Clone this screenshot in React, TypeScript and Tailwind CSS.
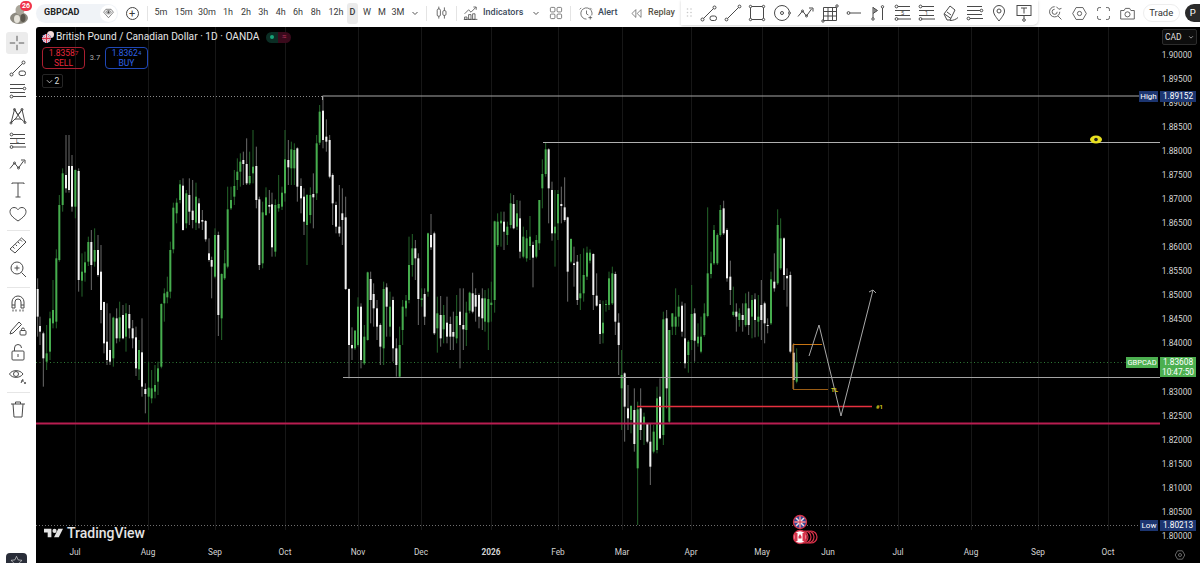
import type { ReactNode } from 'react'

const FONT = "font-['Roboto','Liberation_Sans',sans-serif]"

// x, wick top, body top, body bottom, wick bottom, green? (3x crop units, x from 36, y from 90)
const LEFT: number[][] = [
  [5,565,597,680,740,0],[12,680,708,725,765,0],[22,725,730,805,890,0],[32,705,790,815,840,1],[42,665,685,785,810,1],
  [51,570,660,700,715,1],[61,478,505,695,715,1],[70,315,345,510,515,1],[80,235,250,345,365,1],[90,135,255,295,308,0],
  [99,135,228,300,308,0],[108,195,228,350,365,0],[118,238,240,350,385,1],[128,235,243,570,605,0],[138,490,545,572,620,1],
  [147,485,517,548,575,1],[157,440,456,515,528,1],[166,420,456,525,600,0],[176,415,480,515,530,1],[186,435,480,555,560,0],
  [195,465,545,660,700,0],[204,635,636,760,790,0],[213,640,755,810,825,0],[222,670,780,815,825,0],[232,680,683,805,830,1],
  [242,655,685,745,760,0],[251,635,682,745,755,1],[261,645,675,745,748,0],[270,640,670,740,785,1],[280,645,672,715,745,0],
  [290,690,715,745,775,0],[300,710,742,835,858,0],[309,750,780,838,870,1],[318,685,787,890,920,0],[328,880,897,912,970,0],
  [338,815,893,920,1000,1],[347,840,895,925,940,1],[357,825,885,905,925,1],[366,815,835,875,915,1],[376,640,642,830,835,1],
  [385,595,610,640,695,1],[394,560,605,622,640,1],[403,455,480,605,625,1],[412,338,353,478,490,1],[422,325,338,370,400,1],
  [432,270,283,330,340,1],[441,265,287,420,422,0],[451,300,310,400,415,1],[460,265,315,365,405,0],[470,270,362,390,415,0],
  [480,278,320,398,420,1],[489,325,340,400,415,0],[499,360,390,395,420,0],[509,390,393,448,455,0],[519,445,490,510,515,0],
  [527,500,510,530,625,0],[537,415,435,560,565,1],[547,425,435,675,738,0],[557,550,552,685,750,1],[566,480,520,565,570,1],
  [575,290,358,530,535,1],[585,290,330,355,360,1],[595,240,288,320,345,1],[604,205,245,270,300,1],[613,190,215,245,290,1],
  [622,185,210,222,285,0],[632,145,222,280,285,0],[641,185,258,280,285,1],[651,120,230,250,280,1],[661,170,228,330,355,0],
  [670,320,328,525,540,0],[680,335,367,520,535,1],[690,292,322,375,378,1],[700,300,345,350,370,0],[708,308,343,472,500,0],
  [718,328,345,485,500,1],[728,255,342,355,365,1],[738,290,308,350,360,1],[747,120,208,310,335,1],[757,150,210,232,285,0],
  [766,155,178,235,285,1],[775,160,180,235,285,1],[784,172,175,290,335,0],[795,265,288,325,370,0],[804,295,320,395,435,0],
  [813,312,315,405,525,1],[823,292,315,375,400,1],[832,250,312,322,415,0],[842,135,160,310,330,1],[851,45,65,158,165,1],
  [861,20,62,150,175,0],[871,88,140,155,185,0],[881,135,150,260,265,0],[890,250,255,340,405,0],[900,335,345,410,430,0],
  [910,285,410,430,440,0],[919,295,370,390,465,0],[929,320,382,597,600,0],[939,595,597,765,865,0],[948,712,765,775,810,0],
  [957,720,722,775,780,1],[966,622,650,765,770,1],[975,640,650,810,835,0],[985,705,740,820,825,1],[995,545,547,750,752,1],
  [1004,545,567,630,700,0],[1013,580,612,655,710,0],[1023,630,655,710,750,0],[1033,700,705,770,825,0],[1043,575,597,775,825,1],
  [1052,580,592,650,740,0],[1062,605,650,710,740,1],[1071,620,630,775,815,0],[1081,745,775,825,860,0],[1091,710,765,860,862,1],
  [1100,630,650,720,765,1],[1110,615,632,655,680,1],[1119,440,525,630,640,1],[1129,432,475,525,560,1],[1138,450,475,505,570,0],
  [1147,490,505,627,705,0],[1157,595,625,630,650,1],[1166,595,612,680,705,0],[1176,428,430,605,620,1],[1185,372,435,472,480,0],
  [1195,425,430,730,735,0],
]

// same, x from 420, y from 130
const RIGHT: number[][] = [
  [52,500,550,595,668,1],[62,498,555,625,650,0],[71,525,555,598,640,1],[81,500,578,620,640,0],[91,560,582,620,660,0],
  [100,545,606,620,660,0],[110,495,558,625,640,1],[120,475,545,585,715,0],[130,475,585,598,660,0],[139,515,548,600,648,1],
  [149,485,488,542,550,1],[158,428,490,545,550,0],[167,475,495,530,575,0],[177,490,495,560,595,0],[187,475,505,565,600,0],
  [195,480,505,575,605,1],[205,475,507,577,660,1],[214,455,518,525,575,1],[224,272,274,510,548,1],[233,250,275,345,350,1],
  [243,245,272,280,350,1],[252,245,275,305,360,0],[262,275,290,315,345,1],[272,190,220,285,295,1],[281,195,222,295,298,0],
  [291,210,250,290,300,1],[300,212,265,365,385,0],[310,290,320,380,385,1],[320,300,325,385,395,1],[330,258,320,348,390,1],
  [339,335,345,383,472,0],[349,315,330,380,385,1],[358,210,210,340,360,1],[367,88,132,175,235,1],[377,38,58,132,140,1],
  [386,55,58,175,280,0],[396,155,180,310,332,0],[405,180,290,310,410,1],[414,180,192,280,330,1],[424,170,222,228,280,0],
  [434,142,232,270,275,0],[443,260,262,425,515,0],[453,325,327,395,400,1],[462,350,400,405,470,0],[472,375,395,510,525,0],
  [481,372,490,505,540,1],[491,355,435,490,515,1],[501,350,368,440,450,1],[510,358,368,392,400,1],[520,370,372,495,540,0],
  [530,430,497,527,530,0],[540,510,522,612,642,0],[549,512,578,610,640,1],[558,510,522,525,545,1],[567,425,445,525,540,1],
  [577,410,430,520,525,1],[586,425,432,575,615,0],[596,550,578,645,735,0],[605,660,735,775,900,1],[614,727,730,830,935,0],
  [624,765,835,865,900,0],[633,825,828,870,910,1],[643,775,840,942,965,0],[653,815,838,1015,1185,1],[662,775,835,900,930,0],
  [672,848,860,880,945,1],[682,880,882,935,940,0],[691,880,935,1010,1065,0],[701,885,905,965,970,1],[711,770,805,960,970,1],
  [720,745,800,925,928,0],[730,545,568,915,945,1],[740,540,565,775,835,0],[748,600,600,875,880,1],[757,550,550,590,615,1],
  [767,475,560,590,615,1],[776,495,530,560,590,1],[786,515,527,605,620,0],[795,520,625,700,715,0],[805,630,635,675,728,1],
  [815,465,552,630,660,1],[824,535,550,632,695,0],[834,580,620,640,650,1],[843,560,620,665,670,1],[853,520,550,615,620,1],
  [863,232,430,558,562,1],[873,365,400,432,445,1],[882,285,300,400,405,1],[892,310,315,400,405,1],[901,225,240,315,320,1],
  [911,212,235,310,315,0],[921,295,300,445,455,0],[931,392,440,480,525,0],[940,470,545,555,560,1],[949,520,545,560,605,0],
  [958,535,550,570,590,1],[968,520,555,570,605,0],[977,490,520,585,590,1],[986,485,535,585,615,0],[996,495,510,560,625,1],
  [1005,490,508,570,622,0],[1015,495,560,575,620,1],[1024,450,525,570,630,0],[1034,515,520,580,640,0],[1043,565,585,588,610,0],
  [1053,425,448,580,585,1],[1063,370,455,475,485,0],[1073,238,285,460,465,1],[1082,265,325,415,420,1],[1092,322,325,435,480,0],
  [1101,415,438,445,530,0],[1111,425,435,665,670,0],[1121,640,668,750,778,0],[1130,655,697,755,760,1],
]

// 1.83500 sits under the live price label, so it is left blank
const PRICES = ['1.90000','1.89500','1.89000','1.88500','1.88000','1.87500','1.87000','1.86500','1.86000','1.85500','1.85000','1.84500','1.84000','','1.83000','1.82500','1.82000','1.81500','1.81000','1.80500','1.80000']

const MONTHS: [string, number][] = [['Jul',75],['Aug',148],['Sep',215],['Oct',285],['Nov',358],['Dec',421],['2026',491],['Feb',558],['Mar',622],['Apr',691],['May',762],['Jun',828],['Jul',898],['Aug',971],['Sep',1038],['Oct',1108]]

const INTERVALS: [string, number][] = [['5m',22],['15m',23.5],['30m',23],['1h',19],['2h',17],['3h',17.5],['4h',17.5],['6h',17],['8h',18.5],['12h',22]]

function Icon({ children, size = 20, className = '' }: { children: ReactNode; size?: number; className?: string }) {
  return (
    <svg width={size} height={size} viewBox="0 0 20 20" fill="none" stroke="#4a4a4a" strokeWidth="1" className={`shrink-0 ${className}`}>
      {children}
    </svg>
  )
}

const Trend = () => <Icon><circle cx="3.5" cy="16.5" r="1.5"/><path d="M4.6 15.4 14.4 5.6"/><circle cx="15.5" cy="4.5" r="1.5"/><rect x="11" y="13" width="6.5" height="4.5" rx="2"/></Icon>
const Fib = () => <Icon><path d="M2 3.5h15M2 7.5h13"/><circle cx="16.5" cy="7.5" r="1.3"/><path d="M2 11.5h15M5 15.5h13"/><circle cx="3.5" cy="15.5" r="1.4"/></Icon>
const Pattern = () => <Icon><path d="M3 17 6.5 3.5 10 9l4-5.5 3 13-4-3.5-6 0z"/><path d="M6.5 3.5 13 13.5M14 3.5 7 13.5"/><circle cx="3" cy="17" r="1"/><circle cx="6.5" cy="3.5" r="1"/><circle cx="14" cy="3.5" r="1"/><circle cx="17" cy="16.5" r="1"/></Icon>
const Proj = ({ n }: { n: string }) => <Icon><circle cx="3.5" cy="3.5" r="1.4"/><path d="M5 3.5h12M2 7.5h15M5 16h13M2 12.5h15"/><circle cx="3.5" cy="16" r="1.4"/><text x="9.5" y="12" fontSize="5.5" fill="#4a4a4a" stroke="none" textAnchor="middle">{n}</text></Icon>
const Zigzag = () => <Icon><path d="M2 13.5 6.5 8l4 5 5-7"/><path d="M13 5h4v3.5"/><circle cx="6.5" cy="8" r="1"/><circle cx="10.5" cy="13" r="1"/></Icon>

function TbIcon({ children }: { children: ReactNode }) {
  return <div className="w-[24.2px] flex justify-center items-center shrink-0">{children}</div>
}

function UkFlag({ size = 10 }: { size?: number }) {
  return (
    <svg width={size} height={size} viewBox="0 0 20 20">
      <defs><clipPath id="uk"><circle cx="10" cy="10" r="10"/></clipPath></defs>
      <g clipPath="url(#uk)">
        <rect width="20" height="20" fill="#2b4a9b"/>
        <path d="M0 0 20 20M20 0 0 20" stroke="#fff" strokeWidth="4"/>
        <path d="M0 0 20 20M20 0 0 20" stroke="#d8324a" strokeWidth="1.4"/>
        <path d="M10 0v20M0 10h20" stroke="#fff" strokeWidth="6"/>
        <path d="M10 0v20M0 10h20" stroke="#d8324a" strokeWidth="3"/>
      </g>
    </svg>
  )
}

function TopBar() {
  return (
    <header className="h-[26px] shrink-0 flex items-center text-[9px] text-[#3a3a3a] bg-white relative whitespace-nowrap">
      <div className="w-[36px] h-full relative shrink-0">
        <svg width="24" height="24" viewBox="0 0 24 24" className="absolute left-[7px] top-[1px]">
          <ellipse cx="12" cy="17" rx="9" ry="6" fill="#8d8a80"/>
          <ellipse cx="13" cy="9" rx="4.5" ry="5" fill="#aaa69a"/>
          <ellipse cx="10" cy="18" rx="3" ry="4" fill="#e6e3da"/>
          <ellipse cx="16" cy="17" rx="2.5" ry="4" fill="#5b574d"/>
        </svg>
        <span className="absolute left-[20px] top-[1px] w-[12px] h-[10px] rounded-full bg-[#f0334a] text-white text-[7px] font-bold flex items-center justify-center">26</span>
      </div>
      <div className="w-[82px] h-[19px] rounded-full bg-[#f0f3f7] flex items-center justify-between pl-[8px] pr-[1px] shrink-0">
        <span className="font-bold text-[#222] text-[9px]">GBPCAD</span>
        <span className="w-[17px] h-[17px] rounded-full bg-white flex items-center justify-center">
          <Icon size={13}><path d="M2.5 8 6 3.5h8L17.500 8 10 16.500z"/><path d="M5.500 8c2.500-3.500 6.500-3.500 9 0-2.500 3.500-6.500 3.500-9 0z"/><circle cx="10" cy="8" r="1.300" fill="#4a4a4a"/></Icon>
        </span>
      </div>
      <div className="w-[29px] flex justify-center shrink-0 ml-[-1px]">
        <span className="w-[13px] h-[13px] rounded-full border border-[#444] flex items-center justify-center text-[11px] leading-none ml-[1px]">+</span>
      </div>
      <span className="w-px h-[15px] bg-[#e4e4e4] shrink-0 mr-[2px] ml-[1px]"/>
      <div className="flex items-center shrink-0">
        {INTERVALS.map(([t, w]) => (
          <span key={t} style={{ width: w }} className="text-center shrink-0">{t}</span>
        ))}
        <span className="w-[11px] h-[21px] bg-[#ebebeb] rounded-[3px] flex items-center justify-center font-medium">D</span>
        <span className="w-[18px] text-center">W</span>
        <span className="w-[12px] text-center">M</span>
        <span className="w-[20px] text-center">3M</span>
        <svg width="8" height="8" viewBox="0 0 8 8" className="ml-[3px]" fill="none" stroke="#555"><path d="M1.500 3 4 5.500 6.500 3"/></svg>
      </div>
      <span className="w-px h-[15px] bg-[#e4e4e4] shrink-0 ml-[7px]"/>
      <div className="w-[29px] flex justify-center shrink-0">
        <Icon size={16}><path d="M6 2v3M6 14v3M13 3v4M13 13v4"/><rect x="4" y="5" width="4" height="9" rx="1.500"/><rect x="11" y="7" width="4" height="6" rx="1.500"/></Icon>
      </div>
      <span className="w-px h-[15px] bg-[#e4e4e4] shrink-0"/>
      <div className="flex items-center shrink-0 ml-[6px] text-[#3c4a5c]">
        <Icon size={16}><path d="M2 11 7 6l3 3 6-6"/><path d="M13 2.500h3.500V6"/><path d="M2 18v-3h3v3zM7 18v-6h3v6zM12 18v-7h3v7zM1 18h17"/></Icon>
        <span className="ml-[4px] w-[39px] font-medium">Indicators</span>
        <svg width="8" height="8" viewBox="0 0 8 8" className="ml-[10px]" fill="none" stroke="#555"><path d="M1.500 3 4 5.500 6.500 3"/></svg>
      </div>
      <div className="w-[28px] flex justify-center shrink-0 ml-[2px]">
        <Icon size={14}><rect x="2" y="2" width="6.500" height="6.500" rx="1.500"/><rect x="11.500" y="2" width="6.500" height="6.500" rx="1.500"/><rect x="2" y="11.500" width="6.500" height="6.500" rx="1.500"/><rect x="11.500" y="11.500" width="6.500" height="6.500" rx="1.500"/></Icon>
      </div>
      <span className="w-px h-[15px] bg-[#e4e4e4] shrink-0 mr-[8px]"/>
      <Icon size={15}><path d="M10 17.500a7.500 7.500 0 1 1 7-5"/><path d="M10 6v4.500l2.500 1.500M3 2.500 1 4.500M15 2.500l2 2M15 13v5M12.500 15.500h5"/></Icon>
      <span className="ml-[4px] w-[19px] font-medium text-[#3c4a5c] shrink-0">Alert</span>
      <svg width="13" height="13" viewBox="0 0 20 20" fill="none" stroke="#4a4a4a" className="ml-[13px] shrink-0"><path d="M9 4 3 10l6 6zM17 4l-6 6 6 6z"/></svg>
      <span className="ml-[5px] w-[27px] font-medium text-[#5a5346] shrink-0">Replay</span>
      <div className="ml-[6px] h-[25px] w-[357px] rounded-br-[5px] shadow-[0_1px_3px_rgba(0,0,0,0.18)] bg-white flex items-center shrink-0 self-start pl-[5px]">
        <svg width="7" height="9" viewBox="0 0 7 9" className="mr-[4px] shrink-0" fill="#c9c9c9"><circle cx="1.500" cy="1" r=".8"/><circle cx="5" cy="1" r=".8"/><circle cx="1.500" cy="4.500" r=".8"/><circle cx="5" cy="4.500" r=".8"/><circle cx="1.500" cy="8" r=".8"/><circle cx="5" cy="8" r=".8"/></svg>
        <TbIcon><Trend/></TbIcon>
        <TbIcon><Icon><circle cx="3.500" cy="16.500" r="1.400"/><path d="M4.500 15.500 15.500 4.500"/><circle cx="16.500" cy="3.500" r="1.400"/></Icon></TbIcon>
        <TbIcon><Icon><rect x="3.500" y="3.500" width="13" height="13"/><circle cx="3.500" cy="3.500" r="1.200" fill="#fff"/><circle cx="16.500" cy="3.500" r="1.200" fill="#fff"/><circle cx="3.500" cy="16.500" r="1.200" fill="#fff"/><circle cx="16.500" cy="16.500" r="1.200" fill="#fff"/></Icon></TbIcon>
        <TbIcon><Icon><circle cx="10" cy="10" r="7.500"/><circle cx="10" cy="10" r="1.500"/><circle cx="17.500" cy="10" r="1" fill="#fff"/></Icon></TbIcon>
        <TbIcon><Zigzag/></TbIcon>
        <TbIcon><Icon><path d="M3.500 4.500h13v13h-13zM3.500 8.500h13M3.500 13h13M8 4.500v13M12.500 4.500v13"/><circle cx="17" cy="3" r="1.200"/><circle cx="3" cy="18" r="1.200"/></Icon></TbIcon>
        <TbIcon><Icon><circle cx="4.500" cy="10" r="1.400"/><path d="M6 10h11"/></Icon></TbIcon>
        <TbIcon><Icon><path d="M5 4v11"/><path d="M5 4.500 9.500 7.500 5 10.500" fill="#888"/><circle cx="5" cy="16" r="1.200"/><path d="M14.500 5v12"/><circle cx="14.500" cy="3.800" r="1.200"/></Icon></TbIcon>
        <TbIcon><Proj n="5"/></TbIcon>
        <TbIcon><Proj n="1"/></TbIcon>
        <TbIcon><Icon><path d="M3 11 9 3l5 4-5 10H6z"/><path d="M3.500 11 10 15.500M9 17.500c3 0 6-1 8-3"/><path d="M6 9l4 3"/></Icon></TbIcon>
        <TbIcon><Fib/></TbIcon>
        <TbIcon><Icon><path d="M10 18c-4-5-5.500-7.500-5.500-10a5.500 5.500 0 0 1 11 0c0 2.500-1.500 5-5.500 10z"/><circle cx="10" cy="8" r="2"/></Icon></TbIcon>
        <TbIcon><Icon><rect x="3" y="2.500" width="14" height="10"/><path d="M7 5h6M10 5v5.500M10 12.500v3"/><circle cx="10" cy="17" r="1.300"/></Icon></TbIcon>
      </div>
      <div className="w-[5px] shrink-0"/>
      <TbIcon><Icon size={17}><path d="M9 2a6 6 0 1 0 6 6"/><path d="M9 5a3 3 0 1 0 3 3M13 13l4 4M11 2l3 3 3-1"/></Icon></TbIcon>
      <TbIcon><Icon size={17}><path d="M6 3h8l4 7-4 7H6l-4-7z"/><circle cx="10" cy="10" r="2.500"/></Icon></TbIcon>
      <TbIcon><Icon size={17}><path d="M3 7V5a2 2 0 0 1 2-2h2M13 3h2a2 2 0 0 1 2 2v2M17 13v2a2 2 0 0 1-2 2h-2M7 17H5a2 2 0 0 1-2-2v-2"/></Icon></TbIcon>
      <TbIcon><Icon size={17}><path d="M2 6.500h4L7.500 4h5L14 6.500h4v10H2z"/><circle cx="10" cy="11" r="3"/></Icon></TbIcon>
      <span className="ml-[3px] w-[37px] h-[18px] rounded-full border border-[#eeeeee] flex items-center justify-center shrink-0 text-[#333] text-[9.500px]">Trade</span>
      <span className="ml-[5px] w-[15px] h-[18px] rounded-l-full bg-[#2a2a2a] text-white text-[9.500px] pl-[5px] flex items-center shrink-0">P</span>
    </header>
  )
}

function Sidebar() {
  return (
    <aside className="w-[36px] shrink-0 flex flex-col items-center bg-white pt-[5px] relative">
      <div className="w-[22px] h-[22px] rounded-[3px] bg-[#ececec] flex items-center justify-center mb-[3px] ml-[-2px]">
        <Icon size={18}><path d="M10 2v6M10 12v6M2 10h6M12 10h6"/></Icon>
      </div>
      <div className="h-[21px] flex items-center"><Trend/></div>
      <div className="h-[26px] flex items-center"><Fib/></div>
      <div className="h-[24px] flex items-center"><Pattern/></div>
      <div className="h-[25px] flex items-center"><Proj n="L"/></div>
      <div className="h-[24px] flex items-center"><Zigzag/></div>
      <div className="h-[25px] flex items-center">
        <Icon><path d="M4 4V3h12v1M10 3v14M7.500 17h5"/></Icon>
      </div>
      <div className="h-[24px] flex items-center">
        <Icon><path d="M10 17C4 13 2 10.500 2 7.500 2 5 4 3.500 6 3.500c1.700 0 3 .8 4 2.200 1-1.400 2.300-2.200 4-2.200 2 0 4 1.500 4 4 0 3-2 5.500-8 9.500z"/></Icon>
      </div>
      <span className="w-[23px] h-px bg-[#e6e6e6] my-[3.500px]"/>
      <div className="h-[21px] flex items-center">
        <Icon><path d="M2 14 13.500 3l4.500 4L7 18z"/><path d="M5 12l1.500 1.500M7.500 9.500 9 11M10 7l1.500 1.500M12.500 5 14 6.500"/></Icon>
      </div>
      <div className="h-[27px] flex items-center">
        <Icon><circle cx="9" cy="9" r="6"/><path d="M13.500 13.500 18 18M9 6.500v5M6.500 9h5"/></Icon>
      </div>
      <span className="w-[23px] h-px bg-[#e6e6e6] my-[4.500px]"/>
      <div className="h-[24px] flex items-center">
        <Icon><path d="M4 14V8a6 6 0 0 1 12 0v6h-3V8a3 3 0 0 0-6 0v6z"/><path d="M4 11h3M13 11h3M5 15.500v2M8 15.500v2M12 15.500v2M15 15.500v2"/></Icon>
      </div>
      <div className="h-[24px] flex items-center">
        <Icon><path d="M3 13 11 4l2.500 2.500L5 15l-3 1z"/><rect x="12" y="12.500" width="6" height="4.500" rx="1"/><path d="M13.500 12.500v-1a1.500 1.500 0 0 1 3 0"/></Icon>
      </div>
      <div className="h-[24px] flex items-center">
        <Icon><rect x="4" y="9" width="12" height="9" rx="1"/><path d="M6.500 9V6a3.500 3.500 0 0 1 7 0"/><path d="M10 12v3"/></Icon>
      </div>
      <div className="h-[23px] flex items-center">
        <Icon><path d="M1.500 8C4 3.500 12 3.500 15 8c-3 4.500-11 4.500-13.500 0z"/><circle cx="8" cy="8" r="2.500"/><path d="M15 13c-1 1-1 3-2 4M13 15h3"/><circle cx="17" cy="17" r=".7"/></Icon>
      </div>
      <span className="w-[23px] h-px bg-[#e6e6e6] my-[5px]"/>
      <div className="h-[21px] flex items-center">
        <Icon><path d="M3 5h14M5 5l1 13h8l1-13M7.500 5V3h5v2"/></Icon>
      </div>
      <div className="absolute left-[6px] top-[526px] w-[21px] h-[24px] rounded-[4px] bg-[#2a2e39] flex justify-center pt-[2px]">
        <svg width="13" height="13" viewBox="0 0 20 20" fill="none" stroke="#ddd"><path d="M10 2l2.500 5.500 6 .7-4.400 4 1.200 6L10 15.200 4.700 18.200l1.200-6-4.400-4 6-.7z"/></svg>
      </div>
    </aside>
  )
}

function Candles() {
  const draw = (rows: number[][], ox: number, oy: number) =>
    rows.map(([x, wt, bt, bb, wb, g]) => {
      const cx = ox + x / 3
      return (
        <g key={`${ox}-${x}`}>
          <line x1={cx} x2={cx} y1={oy + wt / 3} y2={oy + wb / 3} stroke={g ? '#24642a' : '#6b6b6b'} strokeWidth="1"/>
          <rect x={cx - 1} y={oy + bt / 3} width="2" height={(bb - bt) / 3} fill={g ? '#46ad4e' : '#f0f0f0'}/>
        </g>
      )
    })
  return <>{draw(LEFT, 36, 90)}{draw(RIGHT, 420, 130)}</>
}

function ChartDrawing() {
  return (
    <svg width="1124" height="536" className="absolute left-0 top-0" fill="none">
      <g transform="translate(-36 -27)">
        {MONTHS.map(([m, x]) => (
          <line key={`${m}${x}`} x1={x + .5} x2={x + .5} y1="27" y2="530" stroke="#171717"/>
        ))}
        <line x1="36" x2="322" y1="96.500" y2="96.500" stroke="#8a8a8a" strokeDasharray="1 2"/>
        <line x1="36" x2="1140" y1="525.500" y2="525.500" stroke="#6f6f6f" strokeDasharray="1 2"/>
        <line x1="36" x2="1126" y1="362.500" y2="362.500" stroke="#2f7a36" strokeDasharray="1 2.500"/>
        <Candles/>
        <path d="M322.500 100v-4H1139" stroke="#a8a8a8"/>
        <path d="M543 142.500H1160" stroke="#b0b0b0"/>
        <path d="M343 377.500H1160" stroke="#a4a4a4"/>
        <path d="M36 423.500H1160" stroke="#b81d50" strokeWidth="2"/>
        <path d="M637 406.500H872" stroke="#e5303f" strokeWidth="1.500"/>
        <path d="M793 389V344.500H822" stroke="#c87412"/>
        <path d="M793 389.500H828" stroke="#9a5c14"/>
        <path d="M809 356 819 325 841 416 873 290" stroke="#a8a8a8"/>
        <path d="M869 292 873 290 876 293" stroke="#a8a8a8"/>
        <ellipse cx="1096" cy="139.500" rx="6" ry="4" fill="#e8e020"/>
        <circle cx="1096" cy="139.500" r="1.800" fill="#222"/>
        <circle cx="811" cy="537" r="6" stroke="#d8324a" fill="#000" strokeWidth="1.200"/>
        <circle cx="808" cy="537" r="6" stroke="#d8324a" fill="#000" strokeWidth="1.200"/>
        <circle cx="805" cy="537" r="6" stroke="#d8324a" fill="#000" strokeWidth="1.200"/>
        <circle cx="802" cy="537" r="6" stroke="#d8324a" fill="#000" strokeWidth="1.200"/>
        <circle cx="800" cy="537" r="6.500" stroke="#d8324a" fill="#fff" strokeWidth="1.300"/>
        <path d="M794.500 533h3v8h-3zM802.500 533h3v8h-3zM800 534l1.500 2.500v2h-3v-2z" fill="#d8324a"/>
        <circle cx="800" cy="522" r="6.500" stroke="#d8324a" fill="#2b4a9b" strokeWidth="1.300"/>
        <path d="M796 518l8 8M804 518l-8 8M800 516.500v11M794.500 522h11" stroke="#f2d9dd" strokeWidth="1.600"/>
        <path d="M800 516.500v11M794.500 522h11" stroke="#d8324a"/>
      </g>
    </svg>
  )
}

function PriceAxis() {
  return (
    <div className="w-[40px] shrink-0 relative text-[#d4d4d4] text-[8.300px] leading-none">
      <div className="absolute left-[2px] top-[2px] w-[35px] h-[16px] rounded-[2px] border border-[#2c2c2c] bg-[#0d0d0d] flex items-center justify-between px-[2px] text-[8.500px] text-[#ddd]">
        CAD
        <svg width="6" height="6" viewBox="0 0 8 8" fill="none" stroke="#bbb"><path d="M1.500 3 4 5.500 6.500 3"/></svg>
      </div>
      <div className="flex flex-col pt-[16px] items-end pr-[8px]">
        {PRICES.map((p, i) => (
          <span key={i} className="h-[24.050px] flex items-center">{p}</span>
        ))}
      </div>
    </div>
  )
}

export default function App() {
  return (
    <div className={`w-[1200px] h-[563px] flex flex-col bg-white overflow-hidden ${FONT}`}>
      <TopBar/>
      <div className="flex flex-1 min-h-0 pt-px">
        <Sidebar/>
        <main className="flex-1 bg-black rounded-tl-[3px] relative flex">
          <div className="flex-1 relative">
            <ChartDrawing/>
            {/* legend */}
            <div className="absolute left-[6px] top-[3px] flex flex-col items-start">
              <div className="flex items-center h-[14px]">
                <div className="relative w-[12px] h-[12px]">
                  <span className="absolute right-0 top-0 w-[7px] h-[7px] rounded-full bg-[#f4dada]"/>
                  <span className="absolute left-0 bottom-0"><UkFlag size={9}/></span>
                </div>
                <span className="ml-[2px] text-[#e6e6e6] text-[10.200px]">British Pound / Canadian Dollar · 1D · OANDA</span>
                <div className="ml-[6px] flex h-[11px] w-[25px] rounded-full overflow-hidden">
                  <span className="w-1/2 bg-[#0b2d24] flex items-center justify-center"><span className="w-[4px] h-[4px] rounded-full bg-[#17a37a]"/></span>
                  <span className="w-1/2 bg-[#3a0a1c] text-[#b03058] text-[8px] leading-none flex items-center justify-center">≈</span>
                </div>
              </div>
              <div className="flex items-center mt-[3px]">
                <div className="w-[43px] h-[22px] rounded-[4px] border border-[#a81f30] flex flex-col items-center justify-center text-[#e8283c] text-[8.500px] leading-[10px]">
                  <span>1.8358<span className="text-[6px] align-top">7</span></span><span>SELL</span>
                </div>
                <span className="w-[20px] text-center text-[#b0b0b0] text-[7.500px]">3.7</span>
                <div className="w-[43px] h-[22px] rounded-[4px] border border-[#1f47b5] flex flex-col items-center justify-center text-[#2f62e8] text-[8.500px] leading-[10px]">
                  <span>1.8362<span className="text-[6px] align-top">4</span></span><span>BUY</span>
                </div>
              </div>
              <div className="mt-[5px] w-[21px] h-[14px] rounded-[2px] border border-[#262626] flex items-center justify-center text-[#ddd] text-[8.500px] gap-[2px]">
                <svg width="7" height="7" viewBox="0 0 8 8" fill="none" stroke="#ccc"><path d="M1 2.500 4 5.500 7 2.500"/></svg>
                2
              </div>
            </div>
            {/* drawing labels */}
            <span className="absolute left-[795px] top-[358px] text-[6px] text-[#d8c81e] font-bold">TL</span>
            <span className="absolute left-[840px] top-[375px] text-[6px] text-[#d8c81e] font-bold">#1</span>
            <div className="absolute left-[1103px] top-[64px] w-[19px] h-[11px] bg-[#1c3570] text-white text-[8px] flex items-center justify-center">High</div>
            <div className="absolute left-[1104px] top-[493px] w-[18px] h-[11px] bg-[#1c3570] text-white text-[8px] flex items-center justify-center">Low</div>
            <div className="absolute left-[1090px] top-[330px] w-[32px] h-[11px] bg-[#4caf50] text-white text-[7.500px] flex items-center justify-center">GBPCAD</div>
            {/* logo */}
            <div className="absolute left-[8px] top-[499px] flex items-center gap-[4px] text-[#e4e4e4]">
              <svg width="19" height="10" viewBox="0 0 36 18" fill="#e4e4e4"><path d="M0 1h14v16H7V8H0z"/><circle cx="20" cy="5" r="4"/><path d="M27 1h9l-8 16h-9z"/></svg>
              <span className="text-[14px] font-medium leading-none">TradingView</span>
            </div>
            {/* time axis */}
            {MONTHS.map(([m, x]) => (
              <span key={`${m}-${x}`} style={{ left: x - 36 }} className={`absolute top-[521px] -translate-x-1/2 text-[8.300px] text-[#d4d4d4] leading-none ${m === '2026' ? 'font-bold' : ''}`}>{m}</span>
            ))}
          </div>
          <div className="absolute right-[4px] top-[64px] w-[36px] h-[11px] bg-[#1c3570] text-white text-[8.300px] leading-none flex items-center justify-center z-10">1.89152</div>
          <div className="absolute right-[4px] top-[493px] w-[36px] h-[11px] bg-[#1c3570] text-white text-[8.300px] leading-none flex items-center justify-center z-10">1.80213</div>
          <div className="absolute right-[4px] top-[330px] w-[36px] h-[20px] bg-[#4caf50] text-white text-[8.300px] leading-[10px] flex flex-col items-center justify-center z-10">
            <span>1.83608</span><span>10:47:50</span>
          </div>
          <PriceAxis/>
          <svg width="12" height="12" viewBox="0 0 20 20" fill="none" stroke="#aaa" className="absolute left-[1138px] top-[522px]"><path d="M6 3h8l4 7-4 7H6l-4-7z"/><circle cx="10" cy="10" r="2.500"/></svg>
        </main>
      </div>
    </div>
  )
}
